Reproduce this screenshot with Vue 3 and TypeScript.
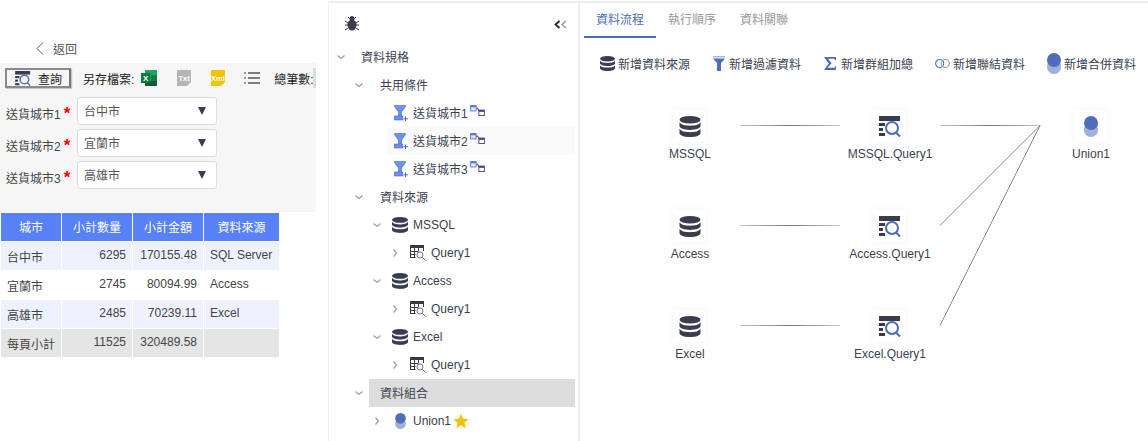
<script setup lang="ts">
interface TreeRow {
  label: string
  level: number
  arrow?: 'down' | 'right'
  icon?: string
  extra?: 'link' | 'star'
  hover?: boolean
  active?: boolean
}

const cities = [
  { label: '送貨城市1', value: '台中市' },
  { label: '送貨城市2', value: '宜蘭市' },
  { label: '送貨城市3', value: '高雄市' },
]

const headers = ['城市', '小計數量', '小計金額', '資料來源']
const rows = [
  ['台中市', '6295', '170155.48', 'SQL Server'],
  ['宜蘭市', '2745', '80094.99', 'Access'],
  ['高雄市', '2485', '70239.11', 'Excel'],
  ['每頁小計', '11525', '320489.58', ''],
]

const tree: TreeRow[] = [
  { label: '資料規格', level: 0, arrow: 'down' },
  { label: '共用條件', level: 1, arrow: 'down' },
  { label: '送貨城市1', level: 2, icon: 'funnel', extra: 'link' },
  { label: '送貨城市2', level: 2, icon: 'funnel', extra: 'link', hover: true },
  { label: '送貨城市3', level: 2, icon: 'funnel', extra: 'link' },
  { label: '資料來源', level: 1, arrow: 'down' },
  { label: 'MSSQL', level: 2, arrow: 'down', icon: 'db' },
  { label: 'Query1', level: 3, arrow: 'right', icon: 'grid' },
  { label: 'Access', level: 2, arrow: 'down', icon: 'db' },
  { label: 'Query1', level: 3, arrow: 'right', icon: 'grid' },
  { label: 'Excel', level: 2, arrow: 'down', icon: 'db' },
  { label: 'Query1', level: 3, arrow: 'right', icon: 'grid' },
  { label: '資料組合', level: 1, arrow: 'down', active: true },
  { label: 'Union1', level: 2, arrow: 'right', icon: 'union', extra: 'star' },
]

const tabs = ['資料流程', '執行順序', '資料關聯']

const actions = [
  { icon: 'db', label: '新增資料來源', w: 15, h: 15 },
  { icon: 'filter', label: '新增過濾資料', w: 14, h: 15 },
  { icon: 'sigma', label: '新增群組加總', w: 15, h: 13 },
  { icon: 'join', label: '新增聯結資料', w: 15, h: 11 },
  { icon: 'union', label: '新增合併資料', w: 14, h: 21 },
]

// the flow diagram is a free canvas, coordinates relative to the right pane
const nodes = [
  { icon: 'db', label: 'MSSQL', x: 110, y: 108 },
  { icon: 'query', label: 'MSSQL.Query1', x: 310, y: 108 },
  { icon: 'db', label: 'Access', x: 110, y: 208 },
  { icon: 'query', label: 'Access.Query1', x: 310, y: 208 },
  { icon: 'db', label: 'Excel', x: 110, y: 308 },
  { icon: 'query', label: 'Excel.Query1', x: 310, y: 308 },
  { icon: 'union', label: 'Union1', x: 511, y: 108 },
]

const links = [
  [160, 125.5, 260, 125.5],
  [160, 225.5, 260, 225.5],
  [160, 325.5, 260, 325.5],
  [360, 125.5, 460, 125.5],
  [360, 225.5, 460, 125.5],
  [360, 325.5, 460, 125.5],
]

const isLatin = (label: string) => /^[A-Za-z]/.test(label)
</script>

<template>
  <svg class="defs" aria-hidden="true">
    <symbol id="db" viewBox="0 0 21 21">
      <ellipse cx="10.5" cy="3.8" rx="10.5" ry="3.8" fill="#393d4e" />
      <path d="M0 6.3c1.5 2.5 5.500 3.400 10.500 3.400S19.500 8.800 21 6.300V10c0 2.200-4.700 3.900-10.500 3.900S0 12.200 0 10z" fill="#393d4e" />
      <path d="M0 12.800c1.500 2.500 5.500 3.400 10.500 3.400s9-.9 10.500-3.400v4.400c0 2.100-4.700 3.800-10.500 3.800S0 19.300 0 17.200z" fill="#393d4e" />
    </symbol>
    <symbol id="query" viewBox="0 0 22 21">
      <rect x="0" y="0" width="21" height="5" fill="#393d4e" />
      <rect x="0" y="7" width="6" height="3" fill="#393d4e" />
      <rect x="0" y="12" width="4" height="3" fill="#393d4e" />
      <rect x="0" y="17" width="6" height="3" fill="#393d4e" />
      <circle cx="13" cy="12" r="6" fill="none" stroke="#4a6cb8" stroke-width="2" />
      <path d="M17 16.500l4 4" stroke="#4a6cb8" stroke-width="2" fill="none" />
    </symbol>
    <symbol id="grid" viewBox="0 0 16 16">
      <path d="M.5 13V.5h13V6" fill="none" stroke="#3a3a3a" />
      <rect x="0" y="0" width="14" height="3" fill="#3a3a3a" />
      <path d="M.5 6.500h8M.5 9.500h5M.5 12.500h5M4.500 3v10M8.500 3v3" fill="none" stroke="#3a3a3a" />
      <circle cx="10" cy="10" r="3" fill="none" stroke="#777" />
      <path d="M12.200 12.200l3.300 3.300" stroke="#777" fill="none" />
    </symbol>
    <symbol id="funnel" viewBox="0 0 16 16">
      <path d="M2.500 .5h11v1.200L9.500 7v4.500H6.500V7L2.500 1.700z" fill="#6f8ff0" stroke="#4a6cb8" stroke-width=".6" />
      <rect x="2.300" y="11" width="8.500" height="4" fill="#6f8ff0" stroke="#4a6cb8" stroke-width=".6" />
      <path d="M13.500 11.500v4.500M11.500 13.800h4.500" stroke="#4a6cb8" fill="none" />
    </symbol>
    <symbol id="link" viewBox="0 0 16 12">
      <rect x=".5" y=".5" width="6" height="6" fill="#dfe5fb" stroke="#5a78d8" />
      <rect x=".5" y=".5" width="6" height="2" fill="#5a78d8" />
      <rect x="9.500" y="5.500" width="6" height="6" fill="#fff" stroke="#3f4a78" />
      <rect x="9.500" y="5.500" width="6" height="2" fill="#3f4a78" />
      <path d="M6.500 3.500h2l1 3" fill="none" stroke="#444" />
    </symbol>
    <symbol id="union" viewBox="0 0 14 21">
      <rect x="0" y="6" width="14" height="15" rx="7" fill="#a0b0da" />
      <circle cx="7" cy="7" r="7" fill="#4f6db8" />
    </symbol>
    <symbol id="filter" viewBox="0 0 14 15">
      <path d="M1 0h12v1.500H1z" fill="#a8b8e0" />
      <path d="M1 2.500h12L9 7v8H5V7z" fill="#4f6db8" />
    </symbol>
    <symbol id="sigma" viewBox="0 0 11 12">
      <path d="M0 0h10.500v3H9.600L9 1.600H3.200L6.500 5.800 2.800 10h6.400l.6-1.400h.9L10.300 12H0v-.9L4 6 0 .9z" fill="#4a6cb8" />
    </symbol>
    <symbol id="join" viewBox="0 0 16 10">
      <circle cx="5" cy="5" r="4.300" fill="none" stroke="#4f6db8" stroke-width="1.200" />
      <circle cx="11" cy="5" r="4.300" fill="none" stroke="#8a9ed4" stroke-width="1.200" />
    </symbol>
  </svg>

  <div class="page">
    <section class="left">
      <div class="back">
        <svg class="back-arrow" width="8" height="13" viewBox="0 0 8 13">
          <path d="M7 .5L1 6.500l6 6" fill="none" stroke="#555" />
        </svg>
        <span>返回</span>
      </div>

      <div class="panel">
        <div class="toolbar">
          <button class="query-btn" type="button">
            <svg width="16" height="15"><use href="#query" /></svg>
            <span>查詢</span>
          </button>
          <span class="save-label">另存檔案:</span>
          <svg class="ic-excel" width="16" height="16" viewBox="0 0 16 16">
            <rect x="4" y="0" width="12" height="16" fill="#21a366" />
            <rect x="10" y="5" width="6" height="6" fill="#107c41" />
            <rect x="4" y="11" width="12" height="5" fill="#185c37" />
            <rect x="0" y="3" width="9" height="10" fill="#0f7a3e" />
            <text x="2" y="11" class="ic-text ic-x" fill="#fff">X</text>
          </svg>
          <svg class="ic-txt" width="14" height="16" viewBox="0 0 14 16">
            <path d="M0 0h14v12l-4 4H0z" fill="#b5b5b5" />
            <text x="7" y="10.500" class="ic-text" fill="#fff" text-anchor="middle">Txt</text>
          </svg>
          <svg class="ic-xml" width="14" height="16" viewBox="0 0 14 16">
            <path d="M0 0h14v12l-4 4H0z" fill="#f0c400" />
            <text x="7" y="10.500" class="ic-text" fill="#fff" text-anchor="middle">Xml</text>
          </svg>
          <svg class="ic-list" width="16" height="12" viewBox="0 0 16 12">
            <path d="M0 1h2M0 6h2M0 11h2" stroke="#5a78c8" stroke-width="1.500" />
            <path d="M4 1h12M4 6h12M4 11h12" stroke="#555" stroke-width="1.500" />
          </svg>
          <span class="total">總筆數:</span>
          <i class="scroll-thumb"></i>
        </div>

        <div v-for="c in cities" :key="c.label" class="field">
          <label>{{ c.label }}<b>*</b></label>
          <div class="select">
            <span>{{ c.value }}</span>
            <i class="caret"></i>
          </div>
        </div>
      </div>

      <table class="report">
        <thead>
          <tr>
            <th v-for="h in headers" :key="h">{{ h }}</th>
          </tr>
        </thead>
        <tbody>
          <tr v-for="(r, i) in rows" :key="i" :class="{ tint: i % 2 === 0, sum: i === 3 }">
            <td class="city">{{ r[0] }}</td>
            <td class="num">{{ r[1] }}</td>
            <td class="num">{{ r[2] }}</td>
            <td>{{ r[3] }}</td>
          </tr>
        </tbody>
      </table>
    </section>

    <aside class="side">
      <div class="side-head">
        <svg width="14" height="16" viewBox="0 0 14 16">
          <ellipse cx="7" cy="10" rx="4.500" ry="5.500" fill="#393d4e" />
          <circle cx="7" cy="3.500" r="2.500" fill="#393d4e" />
          <path d="M3 2l2 2M11 2L9 4M0 6l3 2M14 6l-3 2M0 10h3M14 10h-3M0 15l3-2M14 15l-3-2" stroke="#393d4e" fill="none" />
        </svg>
        <svg class="collapse" width="13" height="9" viewBox="0 0 13 9">
          <path d="M5.500 1L1.500 4.500l4 3.500" fill="none" stroke="#222" stroke-width="1.700" />
          <path d="M12 1L8 4.500l4 3.500" fill="none" stroke="#999" stroke-width="1.400" />
        </svg>
      </div>
      <ul class="tree">
        <li v-for="(n, i) in tree" :key="i" class="node" :style="{ paddingLeft: 22 + n.level * 18 + 'px' }">
          <span class="arrow-slot">
            <svg v-if="n.arrow" width="8" height="8" viewBox="0 0 8 8">
              <path :d="n.arrow === 'down' ? 'M.5 2.500L4 5.500l3.500-3' : 'M2.500 .5L5.500 4l-3 3.500'" fill="none" stroke="#9a9cb0" stroke-width="1.200" />
            </svg>
          </span>
          <div class="node-body" :class="{ hover: n.hover, active: n.active, iconic: n.icon, latin: isLatin(n.label) }">
            <svg v-if="n.icon === 'union'" class="node-union" width="11" height="16"><use href="#union" /></svg>
            <svg v-else-if="n.icon" class="node-icon" width="16" height="16"><use :href="'#' + n.icon" /></svg>
            <span>{{ n.label }}</span>
            <svg v-if="n.extra === 'link'" class="extra-link" width="15" height="11"><use href="#link" /></svg>
            <svg v-if="n.extra === 'star'" class="extra-star" width="16" height="16" viewBox="0 0 24 24">
              <path d="M12 1l3.300 7.500 8.200.8-6.200 5.400 1.900 8L12 18.500 4.800 22.700l1.900-8L.5 9.300l8.200-.8z" fill="#f2c200" />
            </svg>
          </div>
        </li>
      </ul>
    </aside>

    <main class="main">
      <nav class="tabs">
        <a v-for="(t, i) in tabs" :key="t" class="tab" :class="{ on: i === 0 }">{{ t }}</a>
      </nav>
      <div class="actions">
        <div v-for="a in actions" :key="a.label" class="action">
          <svg :width="a.w" :height="a.h"><use :href="'#' + a.icon" /></svg>
          <span>{{ a.label }}</span>
        </div>
      </div>

      <svg class="links" width="568" height="441">
        <defs>
          <linearGradient v-for="(l, i) in links.slice(0, 4)" :id="'fade' + i" :key="i" gradientUnits="userSpaceOnUse" :x1="l[0]" :y1="l[1]" :x2="l[2]" :y2="l[3]">
            <stop offset="0" stop-color="#c4c4c4" />
            <stop offset=".5" stop-color="#777" />
            <stop offset="1" stop-color="#c4c4c4" />
          </linearGradient>
        </defs>
        <line v-for="(l, i) in links" :key="i" :x1="l[0]" :y1="l[1]" :x2="l[2]" :y2="l[3]" :stroke="i < 4 ? `url(#fade${i})` : '#888'" />
      </svg>

      <div v-for="n in nodes" :key="n.label" class="flow-node" :style="{ left: n.x + 'px', top: n.y + 'px' }">
        <div class="flow-box">
          <svg v-if="n.icon === 'union'" width="14" height="21"><use href="#union" /></svg>
          <svg v-else width="22" height="21"><use :href="'#' + n.icon" /></svg>
        </div>
        <span>{{ n.label }}</span>
      </div>
    </main>
  </div>
</template>

<style scoped>
.defs {
  position: absolute;
  width: 0;
  height: 0;
}

.page {
  display: flex;
  width: 1148px;
  height: 441px;
  overflow: hidden;
  background: #fff;
  color: #3a3f51;
  font: 12px "Liberation Sans", "Noto Sans CJK TC", sans-serif;
}

/* left: report preview */
.left {
  width: 328px;
  flex: none;
}

.back {
  height: 63px;
  box-sizing: border-box;
  padding: 41px 0 8px 36px;
  display: flex;
  align-items: center;
  color: #555;
}

.back-arrow {
  margin-right: 9px;
}

.panel {
  width: 316px;
  height: 149px;
  box-sizing: border-box;
  padding: 4px 0 0 5px;
  background: #f6f6f6;
}

.toolbar {
  display: flex;
  align-items: center;
  height: 22px;
  margin-bottom: 8px;
  position: relative;
  overflow: hidden;
  color: #222;
  white-space: nowrap;
}

.query-btn {
  display: flex;
  align-items: center;
  gap: 7px;
  width: 66px;
  height: 20px;
  box-sizing: border-box;
  padding: 0 0 0 8px;
  border: 2px solid #8a8a8a;
  border-right-color: #777;
  background: #f6f6f6;
  box-shadow: 1px 1px 1px rgba(0, 0, 0, 0.2);
  color: #222;
  font: inherit;
}

.save-label {
  margin-left: 12px;
}

.ic-excel {
  margin-left: 7px;
}

.ic-txt {
  margin-left: 20px;
}

.ic-xml {
  margin-left: 20px;
}

.ic-list {
  margin-left: 19px;
}

.ic-text {
  font-size: 7.500px;
  font-weight: bold;
}

.ic-x {
  font-size: 8px;
}

.total {
  margin-left: 14px;
}

.scroll-thumb {
  position: absolute;
  right: 0;
  top: 1px;
  width: 3px;
  height: 20px;
  background: #ddd;
}

.field {
  display: flex;
  height: 28px;
  margin: 0 0 4px 1px;
}

.field label {
  width: 71px;
  padding-top: 8px;
  color: #444;
}

.field b {
  margin-left: 3px;
  color: #f00;
  font-size: 17px;
  line-height: 10px;
  font-weight: bold;
}

.select {
  width: 140px;
  box-sizing: border-box;
  display: flex;
  align-items: center;
  justify-content: space-between;
  padding: 0 10px 1px 6px;
  border: 1px solid #ddd;
  border-radius: 3px;
  background: #fff;
  color: #555;
}

.caret {
  border-top: 8px solid #3a3f51;
  border-left: 4px solid transparent;
  border-right: 4px solid transparent;
}

.report {
  border-collapse: separate;
  border-spacing: 1px;
  table-layout: fixed;
  width: 280px;
  color: #444;
}

.report th {
  height: 28px;
  box-sizing: border-box;
  padding: 0 0 2px;
  background: #5881f7;
  color: #fff;
  font-weight: normal;
}

.report th:nth-child(1) {
  width: 60px;
}

.report th:nth-child(2),
.report th:nth-child(3) {
  width: 70px;
}

.report td {
  height: 28px;
  box-sizing: border-box;
  padding: 0 6px 2px;
  white-space: nowrap;
}

.report td.city {
  padding-bottom: 0;
}

.report td.num {
  text-align: right;
}

.report .tint td {
  background: #eef2fe;
}

.report .sum td {
  background: #e5e5e5;
}

/* middle: spec tree */
.side {
  width: 252px;
  flex: none;
  box-sizing: border-box;
  border-left: 1px solid #eee;
  border-right: 2px solid #eee;
  border-top: 2px solid #eee;
  margin-top: 1px;
}

.side-head {
  position: relative;
  height: 40px;
  padding: 12px 0 0 16px;
  box-sizing: border-box;
}

.collapse {
  position: absolute;
  left: 225px;
  top: 17px;
}

.tree {
  list-style: none;
  margin: 0;
  padding: 0;
}

.node {
  display: flex;
  height: 28px;
  padding-right: 3px;
}

.node:first-child .node-body {
  padding-left: 10px;
}

.arrow-slot {
  width: 0;
  position: relative;
  display: block;
}

.arrow-slot svg {
  position: absolute;
  left: -14px;
  top: 10px;
}

.node-body {
  flex: 1;
  display: flex;
  align-items: center;
  padding-left: 11px;
  white-space: nowrap;
}

.node-body:not(.latin) span {
  margin-top: -2px;
}

.node-body.iconic {
  padding-left: 5px;
}

.node-body.hover {
  background: #fafafa;
}

.node-body.active {
  background: #ddd;
}

.node-icon {
  margin-right: 5px;
}

.node-union {
  margin: 0 7px 0 3px;
}

.extra-link {
  margin: -5px 0 0 2px;
}

.extra-star {
  margin-left: 2px;
}

/* right: flow designer */
.main {
  position: relative;
  flex: 1;
  border-top: 2px solid #eee;
  margin-top: 1px;
}

.tabs {
  display: flex;
  margin-left: 4px;
  height: 35px;
}

.tab {
  width: 72px;
  box-sizing: border-box;
  text-align: center;
  line-height: 34px;
  color: #999;
}

.tab.on {
  color: #4a6cb8;
  border-bottom: 2px solid #4a6cb8;
}

.actions {
  display: flex;
  gap: 22px;
  padding: 15px 0 0 20px;
}

.action {
  display: flex;
  align-items: center;
  gap: 3px;
  height: 20px;
}

.links {
  position: absolute;
  left: 0;
  top: -3px;
  pointer-events: none;
}

.flow-node {
  position: absolute;
  width: 0;
  display: flex;
  flex-direction: column;
  align-items: center;
  white-space: nowrap;
  margin-top: -1px;
}

.flow-box {
  width: 32px;
  height: 32px;
  flex: none;
  display: flex;
  align-items: center;
  justify-content: center;
  border-radius: 3px;
  background: #fff;
  box-shadow: 0 0 10px rgba(0, 0, 0, 0.05);
  margin-bottom: 5px;
}
</style>
